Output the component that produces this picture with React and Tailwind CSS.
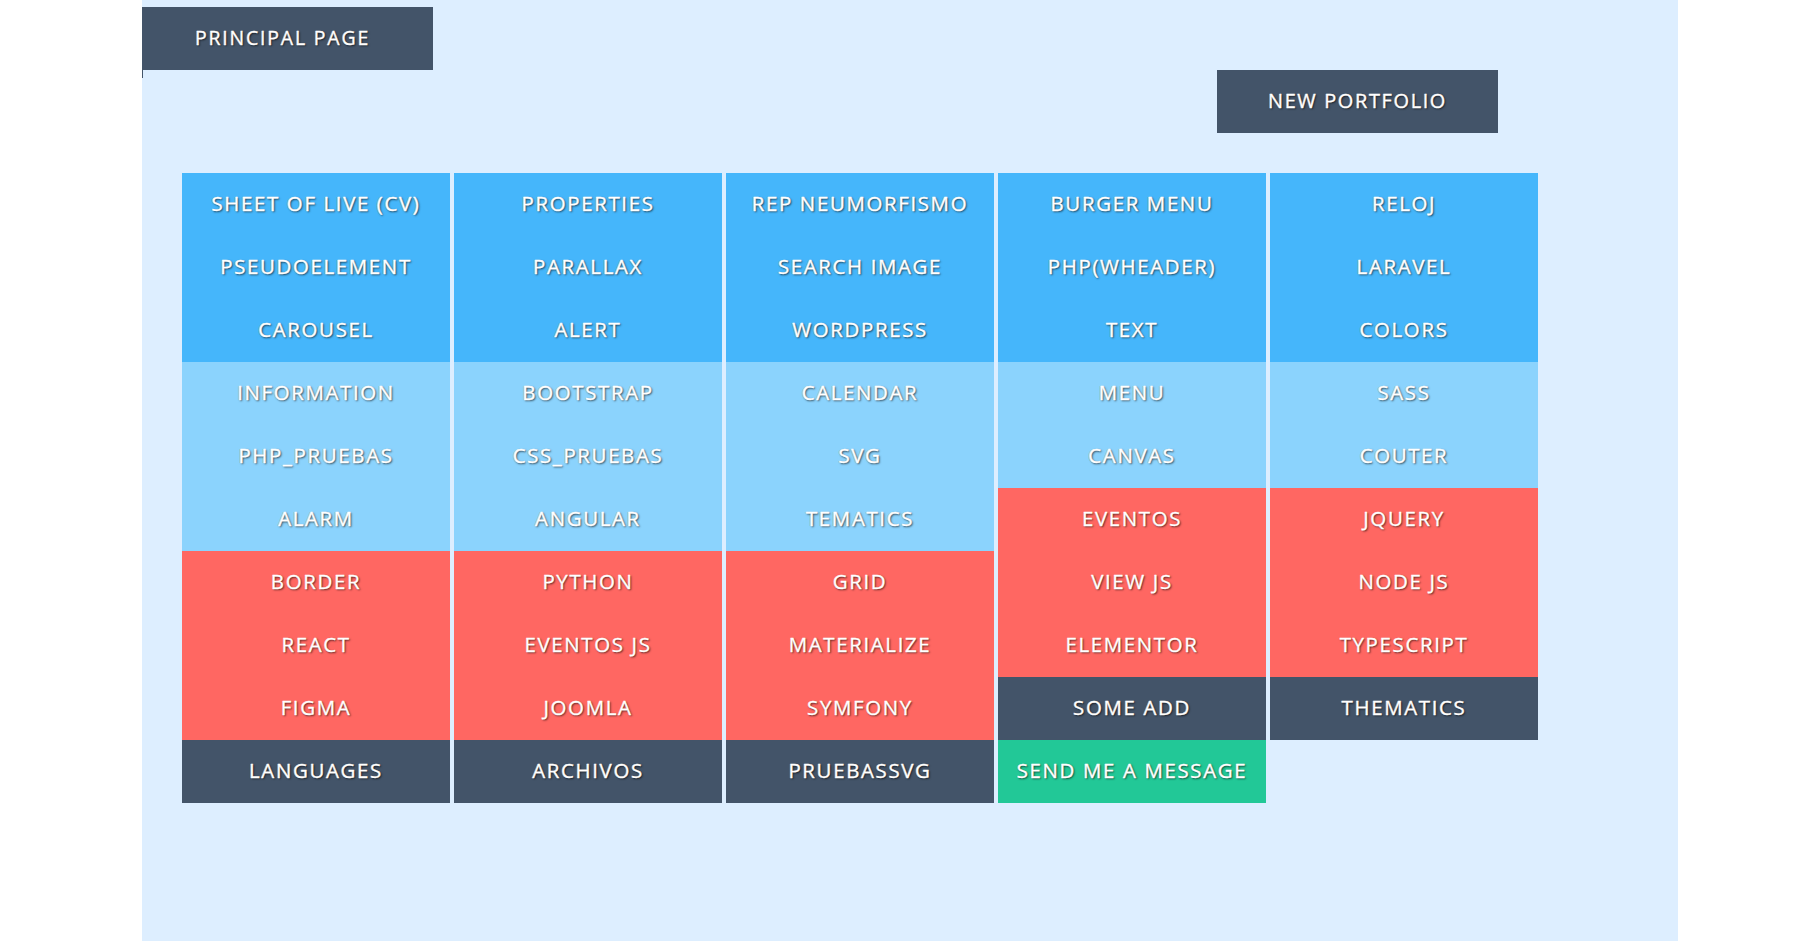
import React from "react";

const C = {
  b: "bg-[#45b6fb]",
  l: "bg-[#8bd3fd]",
  r: "bg-[#ff6762]",
  d: "bg-[#435469]",
  g: "bg-[#22c897]",
};

const columns = [
  [["SHEET OF LIVE (CV)", "b"], ["PSEUDOELEMENT", "b"], ["CAROUSEL", "b"], ["INFORMATION", "l"], ["PHP_PRUEBAS", "l"], ["ALARM", "l"], ["BORDER", "r"], ["REACT", "r"], ["FIGMA", "r"], ["LANGUAGES", "d"]],
  [["PROPERTIES", "b"], ["PARALLAX", "b"], ["ALERT", "b"], ["BOOTSTRAP", "l"], ["CSS_PRUEBAS", "l"], ["ANGULAR", "l"], ["PYTHON", "r"], ["EVENTOS JS", "r"], ["JOOMLA", "r"], ["ARCHIVOS", "d"]],
  [["REP NEUMORFISMO", "b"], ["SEARCH IMAGE", "b"], ["WORDPRESS", "b"], ["CALENDAR", "l"], ["SVG", "l"], ["TEMATICS", "l"], ["GRID", "r"], ["MATERIALIZE", "r"], ["SYMFONY", "r"], ["PRUEBASSVG", "d"]],
  [["BURGER MENU", "b"], ["PHP(WHEADER)", "b"], ["TEXT", "b"], ["MENU", "l"], ["CANVAS", "l"], ["EVENTOS", "r"], ["VIEW JS", "r"], ["ELEMENTOR", "r"], ["SOME ADD", "d"], ["SEND ME A MESSAGE", "g"]],
  [["RELOJ", "b"], ["LARAVEL", "b"], ["COLORS", "b"], ["SASS", "l"], ["COUTER", "l"], ["JQUERY", "r"], ["NODE JS", "r"], ["TYPESCRIPT", "r"], ["THEMATICS", "d"]],
];

const shadow = "[text-shadow:1px_1px_2px_rgba(0,0,0,0.7),-1px_0_0_rgba(255,170,90,0.3)] [-webkit-text-stroke:0.3px_white]";

export default function App() {
  return (
    <div className="w-full min-h-[941px] bg-white font-['Open_Sans',sans-serif]">
      <div className="ml-[142px] w-[1536px] min-h-[941px] bg-[#ddeeff] flex flex-col">
        <div className="pt-[7px]">
          <div className={`w-[291px] h-[63px] pr-[10px] pb-[2px] bg-[#435469] flex items-center justify-center text-white text-[19.5px] tracking-[1.8px] ${shadow}`}>
            PRINCIPAL PAGE
          </div>
          <div className="flex">
            <div className="w-px h-[8px] bg-[#435469] -mb-[8px]"></div>
            <div className={`ml-[1074px] w-[281px] h-[63px] pb-[1px] bg-[#435469] flex items-center justify-center text-white text-[20px] tracking-[1.6px] ${shadow}`}>
              NEW PORTFOLIO
            </div>
          </div>
        </div>
        <div className="mt-[40px] ml-[40px] flex gap-[4px] items-start">
          {columns.map((col, i) => (
            <div key={i} className="w-[268px] flex flex-col">
              {col.map(([t, c]) => (
                <div
                  key={t}
                  className={`${C[c]} h-[63px] pb-[2px] flex items-center justify-center text-white text-[20.5px] tracking-[1.6px] ${shadow}`}
                >
                  {t}
                </div>
              ))}
            </div>
          ))}
        </div>
      </div>
    </div>
  );
}
